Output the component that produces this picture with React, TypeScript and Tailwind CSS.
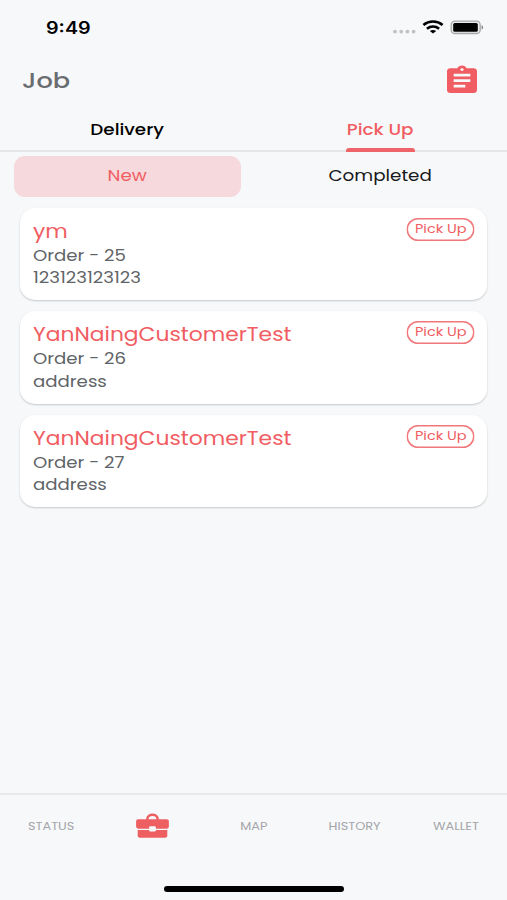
import { useState } from 'react';
import clsx from 'clsx';

interface Job {
  id: number;
  name: string;
  address: string;
}

const JOBS: Job[] = [
  { id: 25, name: 'ym', address: '123123123123' },
  { id: 26, name: 'YanNaingCustomerTest', address: 'address' },
  { id: 27, name: 'YanNaingCustomerTest', address: 'address' },
];

const StatusBar = () => (
  <div className="flex h-[54px] justify-between pl-[46px] pr-[24px]">
    <span className="mt-[18px] h-5 origin-left scale-x-[1.16] font-['Inter',sans-serif] text-[17px] leading-5 font-semibold text-black">
      9:49
    </span>
    <svg className="mt-[18px] h-[18px] w-[91px]" viewBox="392 18 91 18">
      <g fill="#bfc1c3">
        <circle cx="395" cy="31.6" r="1.9" />
        <circle cx="401.2" cy="31.6" r="1.9" />
        <circle cx="407.4" cy="31.6" r="1.9" />
        <circle cx="413.6" cy="31.6" r="1.9" />
      </g>
      <g fill="none" stroke="#000" strokeWidth="2.6">
        <path d="M423.4 25c5.6-4.6 13.6-4.6 19.2 0" />
        <path d="M426.9 28.8c3.6-2.9 8.6-2.9 12.2 0" />
      </g>
      <path d="M429.8 31c2-1.5 4.4-1.5 6.4 0L433 33.4z" fill="#000" />
      <rect x="451.2" y="21.1" width="29" height="12.4" rx="3.6" fill="#e9eaea" stroke="#a9a9a9" strokeWidth="1.3" />
      <rect x="453.2" y="23" width="24.6" height="8.8" rx="1.6" fill="#000" />
      <path d="M481.6 25.2c1.8.6 1.8 3.8 0 4.4z" fill="#777" />
    </svg>
  </div>
);

const ClipboardIcon = () => (
  <svg className="-mt-px h-[33px] w-10" viewBox="0 0 24 24" preserveAspectRatio="none" fill="#f05d62">
    <path d="M19 3h-4.18C14.4 1.84 13.3 1 12 1c-1.3 0-2.4.84-2.82 2H5c-1.1 0-2 .9-2 2v14c0 1.1.9 2 2 2h14c1.1 0 2-.9 2-2V5c0-1.1-.9-2-2-2zm-7 0c.55 0 1 .45 1 1s-.45 1-1 1-1-.45-1-1 .45-1 1-1zm2 14H7v-2h7v2zm3-4H7v-2h10v2zm0-4H7V7h10v2z" />
  </svg>
);

const BriefcaseIcon = () => (
  <svg className="h-[26px] w-[34px] translate-x-[0.5px]" viewBox="0 0 34 26" fill="#ee5f62">
    <path d="M11.9 7.5V5.8c0-2.4 2.1-4.1 5.1-4.1s5.1 1.7 5.1 4.1v1.7" fill="none" stroke="#ee5f62" strokeWidth="2.5" />
    <path d="M3 6.2h28c1.5 0 2.4.9 2.4 2.2v5.2c0 1.2-1 2.1-2.3 2.1H20.4v-1.1c0-.9-.6-1.4-1.6-1.4h-3.6c-1 0-1.6.5-1.6 1.4v1.1H2.9c-1.3 0-2.3-.9-2.3-2.1V8.4c0-1.3.9-2.2 2.4-2.2z" />
    <path d="M2.2 17h11.4v.2c0 .9.6 1.4 1.6 1.4h3.6c1 0 1.6-.5 1.6-1.4V17h11.4v5.8c0 1.2-1 2-2.4 2H4.6c-1.4 0-2.4-.8-2.4-2z" />
  </svg>
);

const JobCard = ({ job }: { job: Job }) => (
  <li className="flex h-[92.5px] items-start justify-between rounded-[15px] bg-white pt-[11px] pr-[13px] pl-[13px] shadow-[0_1px_2px_rgba(0,0,0,0.2)]">
    <div className="flex flex-col items-start text-[15.5px] leading-[22.5px] text-[#606467]">
      <h2 className="mb-px origin-left scale-x-[1.148] text-[19px] leading-[25px] text-[#f05d62]">{job.name}</h2>
      <p className="origin-left scale-x-[1.172]">Order - {job.id}</p>
      <p className="origin-left scale-x-[1.172]">{job.address}</p>
    </div>
    <span className="-mt-px flex h-[23px] w-[68px] translate-x-[0.5px] items-center justify-center rounded-full text-[12.5px] whitespace-nowrap text-[#f05d62] shadow-[inset_0_0_0_1.5px_#f0777b]">
      <span className="scale-x-[1.16]">Pick Up</span>
    </span>
  </li>
);

const App = () => {
  const [tab, setTab] = useState('Pick Up');
  const [filter, setFilter] = useState('New');

  return (
    <div className="flex h-[900px] w-[507px] flex-col overflow-hidden bg-[#f7f8fa] font-['Poppins','Inter',sans-serif]">
      <StatusBar />

      <header className="flex h-[54px] items-center justify-between pr-[25px] pl-[22px]">
        <h1 className="origin-left scale-x-[1.19] text-[21.5px] leading-7 font-medium text-[#6a6d70]">Job</h1>
        <ClipboardIcon />
      </header>

      <nav className="flex h-11 border-b-2 border-[#e5e6e8] text-base font-medium">
        {['Delivery', 'Pick Up'].map((name) => (
          <button
            key={name}
            onClick={() => setTab(name)}
            className={clsx('flex flex-1 flex-col items-center', tab === name ? 'text-[#f05d62]' : 'text-black')}
          >
            <span className="mt-[10px] scale-x-[1.145] leading-6">{name}</span>
            {tab === name && <span className="mt-[6px] h-1 w-[69px] shrink-0 rounded-t-[3px] bg-[#ee6468]" />}
          </button>
        ))}
      </nav>

      <div className="mt-1 flex h-[41px] px-[13.5px] text-base">
        {['New', 'Completed'].map((name) => (
          <button
            key={name}
            onClick={() => setFilter(name)}
            className={clsx(
              'flex flex-1 items-center justify-center rounded-[11px] pb-px first:mr-[26px]',
              filter === name ? 'bg-[#f5d9dc] text-[#f05d62]' : 'text-[#17191c]',
            )}
          >
            <span className="scale-x-[1.145]">{name}</span>
          </button>
        ))}
      </div>

      <ul className="mt-[10.5px] flex flex-1 flex-col gap-[11px] px-5">
        {JOBS.map((job) => (
          <JobCard key={job.id} job={job} />
        ))}
      </ul>

      <footer className="flex h-[107px] flex-col items-center justify-between border-t-2 border-[#e8eaec] pb-[8px]">
        <div className="grid h-[62px] w-full grid-cols-5 place-items-center text-[11.2px] text-[#a3a5a8]">
          <span className="scale-x-[1.15]">STATUS</span>
          <BriefcaseIcon />
          <span className="scale-x-[1.15]">MAP</span>
          <span className="scale-x-[1.15]">HISTORY</span>
          <span className="scale-x-[1.15]">WALLET</span>
        </div>
        <div className="h-[6px] w-[180px] rounded-full bg-black" />
      </footer>
    </div>
  );
};

export default App;
